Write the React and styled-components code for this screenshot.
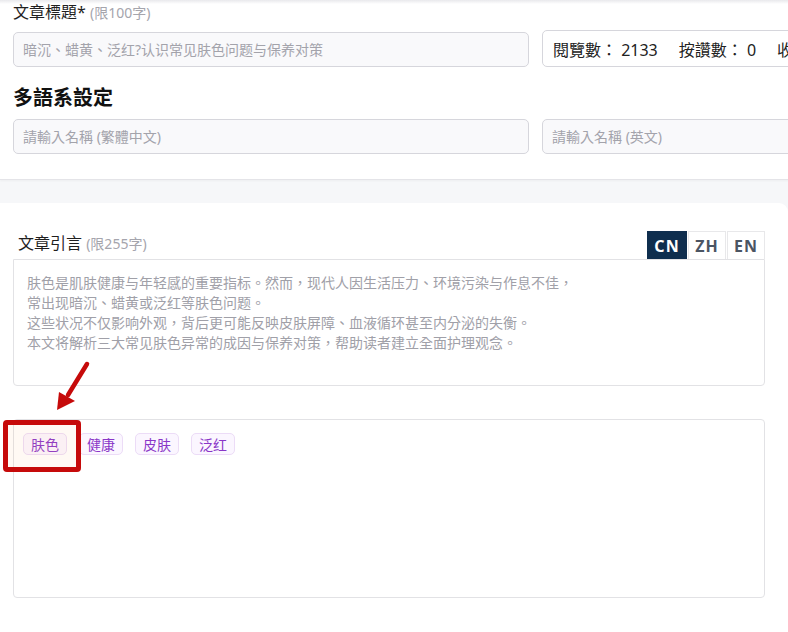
import React from 'react';
import styled, { createGlobalStyle } from 'styled-components';

const GlobalStyle = createGlobalStyle`
  body {
    margin: 0;
    background: #f6f7f9;
    font-family: "Noto Sans", "Noto Sans CJK TC", sans-serif;
    overflow: hidden;
  }
`;

const Page = styled.div`
  width: 788px;
  height: 632px;
  overflow: hidden;
`;

const TopCard = styled.section`
  width: 1100px;
  box-sizing: border-box;
  padding: 0 13px 25px;
  background: linear-gradient(#e9e9ec, #fff 4px);
  border-bottom: 1px solid #e4e4e8;
  box-shadow: 0 1px 2px rgba(0, 0, 0, 0.04);
`;

const Label = styled.div`
  font-size: 16px;
  line-height: 24px;
  color: #1f1f1f;
  padding-left: ${(p) => p.$indent || 0}px;
`;

const Hint = styled.span`
  font-size: 14px;
  color: #a5a5ad;
`;

const Row = styled.div`
  display: flex;
  align-items: flex-end;
  gap: 13px;
  margin-top: ${(p) => p.$top || 0}px;
`;

const Input = styled.input`
  width: 516px;
  height: 35px;
  box-sizing: border-box;
  padding: 0 9px;
  border: 1px solid #d6d6dc;
  border-radius: 5px;
  background: #f9f9fb;
  font: 14px "Noto Sans", "Noto Sans CJK TC", sans-serif;
  color: #333;
  outline: none;
  &::placeholder {
    color: #a3a3ab;
  }
`;

const Stats = styled.div`
  width: 516px;
  height: 37px;
  box-sizing: border-box;
  padding: 0 10px;
  border: 1px solid #d6d6dc;
  border-radius: 5px;
  background: #fff;
  display: flex;
  align-items: center;
  gap: 21px;
  font-size: 16px;
  color: #222;
  white-space: nowrap;
  overflow: hidden;
`;

const SectionTitle = styled.h2`
  margin: 17px 0 7px;
  font-size: 20px;
  line-height: 28px;
  font-weight: 700;
  color: #111;
`;

const BottomCard = styled.section`
  position: relative;
  margin-top: 23px;
  height: 440px;
  padding: 28px 23px 0 13px;
  background: #fff;
  border-top-right-radius: 9px;
`;

const EditorHead = styled.div`
  display: flex;
  justify-content: space-between;
  align-items: flex-start;
  height: 28px;
`;

const LangTabs = styled.div`
  display: flex;
`;

const LangTab = styled.div`
  width: ${(p) => (p.$active ? 40 : 38)}px;
  height: 28px;
  box-sizing: border-box;
  display: flex;
  align-items: center;
  justify-content: center;
  font-size: 16px;
  font-weight: 700;
  letter-spacing: 1px;
  color: ${(p) => (p.$active ? '#fff' : '#4b5563')};
  background: ${(p) => (p.$active ? '#0f2e4e' : '#fff')};
  border: 1px solid ${(p) => (p.$active ? '#0f2e4e' : '#e8e8ea')};
  border-bottom: none;
  & + & {
    margin-left: 1px;
  }
`;

const Quote = styled.div`
  height: 127px;
  box-sizing: border-box;
  padding: 13px 13px;
  border: 1px solid #e2e2e5;
  border-radius: 0 0 4px 4px;
  font-size: 14px;
  line-height: 20px;
  color: #a0a0a8;
`;

const TagBox = styled.div`
  margin-top: 33px;
  height: 179px;
  box-sizing: border-box;
  padding: 13px 9px;
  border: 1px solid #e2e2e5;
  border-radius: 4px;
  display: flex;
  align-items: flex-start;
  gap: 12px;
`;

const Tag = styled.span`
  height: 22px;
  box-sizing: border-box;
  padding: 0 7px;
  display: inline-flex;
  align-items: center;
  border: 1px solid #ecdcf7;
  border-radius: 5px;
  background: #fbf6ff;
  font-size: 14px;
  color: #8a36c8;
`;

const Highlight = styled.div`
  position: absolute;
  left: 3px;
  top: 217px;
  width: 78px;
  height: 52px;
  box-sizing: border-box;
  border: 5px solid #c60a0a;
  border-radius: 4px;
  background: rgba(255, 180, 110, 0.08);
  pointer-events: none;
`;

const Arrow = styled.svg`
  position: absolute;
  left: 40px;
  top: 150px;
`;

const tags = ['肤色', '健康', '皮肤', '泛红'];

const quoteLines = [
  '肤色是肌肤健康与年轻感的重要指标。然而，现代人因生活压力、环境污染与作息不佳，',
  '常出现暗沉、蜡黄或泛红等肤色问题。',
  '这些状况不仅影响外观，背后更可能反映皮肤屏障、血液循环甚至内分泌的失衡。',
  '本文将解析三大常见肤色异常的成因与保养对策，帮助读者建立全面护理观念。',
];

export default function App() {
  return (
    <Page>
      <GlobalStyle />
      <TopCard>
        <Label>
          文章標題* <Hint>(限100字)</Hint>
        </Label>
        <Row $top={5}>
          <Input placeholder="暗沉、蜡黄、泛红?认识常见肤色问题与保养对策" />
          <Stats>
            <span>閱覽數： 2133</span>
            <span>按讚數： 0</span>
            <span>收藏數： 0</span>
          </Stats>
        </Row>
        <SectionTitle>多語系設定</SectionTitle>
        <Row>
          <Input placeholder="請輸入名稱 (繁體中文)" />
          <Input placeholder="請輸入名稱 (英文)" />
        </Row>
      </TopCard>
      <BottomCard>
        <EditorHead>
          <Label $indent={5}>
            文章引言 <Hint>(限255字)</Hint>
          </Label>
          <LangTabs>
            <LangTab $active>CN</LangTab>
            <LangTab>ZH</LangTab>
            <LangTab>EN</LangTab>
          </LangTabs>
        </EditorHead>
        <Quote>
          {quoteLines.map((line) => (
            <div key={line}>{line}</div>
          ))}
        </Quote>
        <TagBox>
          {tags.map((t) => (
            <Tag key={t}>{t}</Tag>
          ))}
        </TagBox>
        <Highlight />
        <Arrow width="60" height="70" viewBox="0 0 60 70">
          <line x1="47" y1="11" x2="28" y2="42" stroke="#c60a0a" strokeWidth="4.5" strokeLinecap="round" />
          <polygon points="17,57 19,39 35,48" fill="#c60a0a" />
        </Arrow>
      </BottomCard>
    </Page>
  );
}
